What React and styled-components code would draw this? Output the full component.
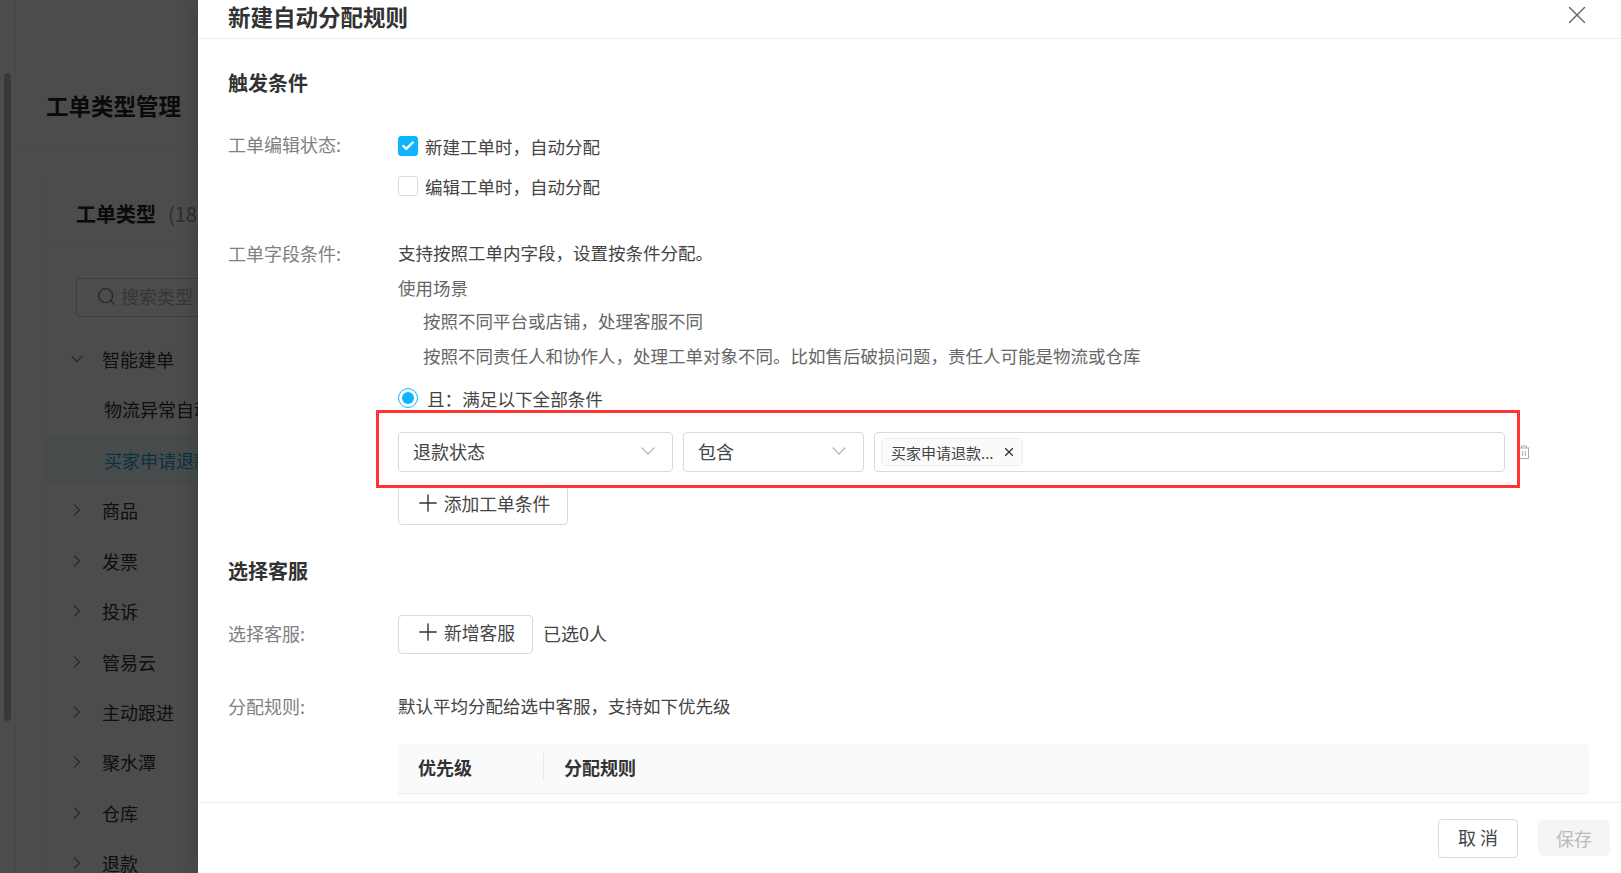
import styled, { createGlobalStyle } from "styled-components"
import { ChevronDown, ChevronRight, Check, Plus, Search, X } from "lucide-react"

const Global = createGlobalStyle`
    html, body{
        margin: 0;
        height: 100%;
        overflow: hidden;
        background: #fff;
    }
    *{
        box-sizing: border-box;
    }
    body{
        font-family: "Noto Sans CJK SC", "Noto Sans", sans-serif;
        font-size: 18px;
        color: #333;
    }
`
const Page = styled.div`
    position: relative;
    width: 1621px;
    height: 873px;
    overflow: hidden;
    display: flex;
    background: #fff;
`
const Rail = styled.div`
    width: 16px;
    flex: none;
    padding: 73px 4px 0;
    border-right: 1px solid #f2f2f2;
    span{
        display: block;
        width: 7px;
        height: 648px;
        border-radius: 4px;
        background: #bdbdbd;
    }
`
const Side = styled.div`
    flex: 1;
`
const PageTitle = styled.div`
    height: 147px;
    padding: 88px 0 0 30px;
    font-size: 22.5px;
    line-height: 34px;
    font-weight: 700;
    color: #222;
    border-bottom: 1px solid #eee;
`
const TypeCard = styled.div`
    margin: 30px 0 0 30px;
    border-left: 1px solid #f4f4f4;
`
const CardTitle = styled.div`
    height: 70px;
    padding: 21px 0 0 29px;
    font-size: 20px;
    line-height: 32px;
    font-weight: 700;
    color: #222;
    border-bottom: 1px solid #eee;
    white-space: nowrap;
    em{
        margin-left: 12px;
        font-style: normal;
        font-weight: 400;
        color: #999;
    }
`
const SearchBox = styled.div`
    display: flex;
    align-items: center;
    gap: 4px;
    width: 200px;
    height: 39px;
    margin: 31px 0 17px 29px;
    padding: 0 0 3px 19px;
    border: 1px solid #ccc;
    border-radius: 4px;
    font-size: 18px;
    color: #b5b5b5;
    white-space: nowrap;
`
const TreeRow = styled.div`
    display: flex;
    align-items: center;
    gap: 15px;
    height: 50.4px;
    padding-left: 20px;
    font-size: 18px;
    color: #333;
    white-space: nowrap;
    svg{
        color: #888;
        flex: none;
    }
`
const TreeLeaf = styled.div`
    height: 50.4px;
    padding-left: 57px;
    font-size: 18px;
    line-height: 50px;
    white-space: nowrap;
    color: ${p => (p.$active ? "#1aa9e0" : "#333")};
    background: ${p => (p.$active ? "#f1fafd" : "transparent")};
`
const Mask = styled.div`
    position: absolute;
    inset: 0;
    background: rgba(0, 0, 0, 0.7);
`
const Drawer = styled.div`
    position: absolute;
    top: 0;
    right: 0;
    bottom: 0;
    width: 1423px;
    display: flex;
    flex-direction: column;
    background: #fff;
    box-shadow: -6px 0 16px rgba(0, 0, 0, 0.12);
`
const DrawerHead = styled.div`
    flex: none;
    height: 39px;
    display: flex;
    align-items: center;
    justify-content: space-between;
    padding: 0 29px 6px 30px;
    border-bottom: 1px solid #eee;
    h1{
        margin: 0;
        font-size: 22.5px;
        line-height: 34px;
        font-weight: 700;
        color: #333;
    }
    svg{
        color: #666;
    }
`
const CloseIcon = styled(X)`
    margin: -8px 0 -6px;
`
const DrawerBody = styled.div`
    flex: 1;
    min-height: 0;
    overflow: hidden;
    padding: 0 32px 0 30px;
`
const Heading = styled.h2`
    margin: ${p => p.$top}px 0 0;
    font-size: 20px;
    line-height: 30px;
    font-weight: 700;
    color: #333;
`
const FormRow = styled.div`
    display: grid;
    grid-template-columns: 170px 1fr;
    align-items: ${p => p.$align || "start"};
    margin-top: ${p => p.$top}px;
`
const Label = styled.div`
    font-size: 18px;
    line-height: 28px;
    padding-bottom: ${p => p.$lift || 0}px;
    color: #808080;
`
const CheckList = styled.div`
    margin-top: -4px;
    padding-bottom: 1px;
`
const CheckLine = styled.div`
    display: flex;
    align-items: center;
    gap: 7px;
    height: 40px;
    font-size: 17.5px;
    color: #444;
`
const Box = styled.span`
    display: flex;
    align-items: center;
    justify-content: center;
    width: 20px;
    height: 20px;
    border-radius: 3px;
    color: #fff;
    border: 1px solid ${p => (p.$on ? "#0fb4ff" : "#d9d9d9")};
    background: ${p => (p.$on ? "#0fb4ff" : "#fff")};
`
const Text = styled.div`
    font-size: 17.5px;
    line-height: 28px;
    height: ${p => p.$h || 28}px;
    padding-left: ${p => p.$indent || 0}px;
    color: ${p => p.$color || "#444"};
    white-space: nowrap;
`
const RadioLine = styled.div`
    display: flex;
    align-items: center;
    gap: 9px;
    height: 28px;
    margin-top: 8px;
    font-size: 17.6px;
    color: #444;
`
const Radio = styled.span`
    display: block;
    width: 20px;
    height: 20px;
    border-radius: 50%;
    border: 1px solid #0fb4ff;
    padding: 3px;
    &::after{
        content: "";
        display: block;
        width: 12px;
        height: 12px;
        border-radius: 50%;
        background: #0fb4ff;
    }
`
const ConditionRow = styled.div`
    position: relative;
    display: flex;
    align-items: center;
    gap: 10px;
    width: 1107px;
    height: 40px;
    margin-top: 20px;
    &::before{
        content: "";
        position: absolute;
        left: -22px;
        right: -15px;
        top: -22px;
        bottom: -16px;
        border: 3px solid #f33;
        pointer-events: none;
        z-index: 1;
    }
`
const SelectBox = styled.div`
    display: flex;
    align-items: center;
    justify-content: space-between;
    flex: none;
    width: ${p => p.$w}px;
    height: 40px;
    padding: 0 12px 2px 14px;
    border: 1px solid #d9d9d9;
    border-radius: 4px;
    font-size: 18px;
    color: #444;
    svg{
        color: #b3b3b3;
        margin-top: -1px;
    }
`
const TagInput = styled.div`
    flex: 1;
    display: flex;
    align-items: center;
    height: 40px;
    padding-left: 6px;
    border: 1px solid #d9d9d9;
    border-radius: 4px;
`
const Tag = styled.span`
    display: flex;
    align-items: center;
    gap: 8px;
    height: 28px;
    padding: 0 6px 0 9px;
    border: 1px solid #eee;
    border-radius: 3px;
    background: #fafafa;
    font-size: 15px;
    color: #444;
    svg{
        color: #333;
    }
`
const Trash = styled.svg`
    position: absolute;
    right: -25px;
    top: 13px;
    width: 12px;
    height: 14px;
`
const OutlineButton = styled.button`
    display: flex;
    align-items: center;
    justify-content: center;
    gap: 2px;
    width: ${p => p.$w}px;
    height: ${p => p.$h || 39}px;
    margin-top: ${p => p.$top || 0}px;
    padding: 0 2px 5px 0;
    border: 1px solid #d9d9d9;
    border-radius: 4px;
    background: #fff;
    font-family: inherit;
    font-size: 17.8px;
    color: #444;
    svg{
        color: #333;
        flex: none;
    }
`
const CancelButton = styled(OutlineButton)`
    padding: 0 0 3px 4px;
    font-size: 18px;
    letter-spacing: 4px;
`
const PickRow = styled.div`
    display: flex;
    align-items: center;
    gap: 10px;
    font-size: 18px;
    color: #444;
    span{
        padding-bottom: 4px;
    }
`
const RuleHead = styled.div`
    display: flex;
    align-items: center;
    height: 50px;
    margin: 24px 0 0 170px;
    background: #fafafa;
    border-bottom: 1px solid #eee;
    border-radius: 4px 4px 0 0;
    font-size: 18px;
    font-weight: 700;
    color: #333;
`
const RuleCell = styled.div`
    width: ${p => p.$w}px;
    padding-left: 20px;
    line-height: 28px;
    transform: translateY(-2px);
    border-right: ${p => (p.$line ? "1px solid #eaeaea" : "none")};
`
const DrawerFoot = styled.div`
    flex: none;
    height: 71px;
    display: flex;
    align-items: center;
    justify-content: flex-end;
    gap: 20px;
    padding: 0 11px 0 0;
    border-top: 1px solid #eee;
`
const SaveButton = styled.button`
    width: 72px;
    height: 36px;
    border: none;
    border-radius: 5px;
    background: #f5f5f5;
    font-family: inherit;
    font-size: 18px;
    color: #bbb;
`
const groups = ["商品", "发票", "投诉", "管易云", "主动跟进", "聚水潭", "仓库", "退款"]

const App = () => {
    return (
        <Page>
            <Global />
            <Rail><span /></Rail>
            <Side>
                <PageTitle>工单类型管理</PageTitle>
                <TypeCard>
                    <CardTitle>工单类型<em>(18)</em></CardTitle>
                    <SearchBox><Search size={21} strokeWidth={1.6} color="#888" />搜索类型</SearchBox>
                    <TreeRow><ChevronDown size={20} strokeWidth={1.5} />智能建单</TreeRow>
                    <TreeLeaf>物流异常自动</TreeLeaf>
                    <TreeLeaf $active>买家申请退款</TreeLeaf>
                    {groups.map(g => (
                        <TreeRow key={g}><ChevronRight size={20} strokeWidth={1.5} />{g}</TreeRow>
                    ))}
                </TypeCard>
            </Side>
            <Mask />
            <Drawer>
                <DrawerHead>
                    <h1>新建自动分配规则</h1>
                    <CloseIcon size={30} strokeWidth={1.1} />
                </DrawerHead>
                <DrawerBody>
                    <Heading $top={29}>触发条件</Heading>
                    <FormRow $top={32}>
                        <Label>工单编辑状态:</Label>
                        <CheckList>
                            <CheckLine>
                                <Box $on><Check size={14} strokeWidth={4} /></Box>
                                新建工单时，自动分配
                            </CheckLine>
                            <CheckLine>
                                <Box />
                                编辑工单时，自动分配
                            </CheckLine>
                        </CheckList>
                    </FormRow>
                    <FormRow $top={32}>
                        <Label>工单字段条件:</Label>
                        <div>
                            <Text $h={35}>支持按照工单内字段，设置按条件分配。</Text>
                            <Text $h={33} $color="#666">使用场景</Text>
                            <Text $h={35} $indent={25} $color="#666">按照不同平台或店铺，处理客服不同</Text>
                            <Text $h={34} $indent={25} $color="#666">按照不同责任人和协作人，处理工单对象不同。比如售后破损问题，责任人可能是物流或仓库</Text>
                            <RadioLine><Radio />且：满足以下全部条件</RadioLine>
                            <ConditionRow>
                                <SelectBox $w={275}>退款状态<ChevronDown size={24} strokeWidth={1.2} /></SelectBox>
                                <SelectBox $w={181}>包含<ChevronDown size={24} strokeWidth={1.2} /></SelectBox>
                                <TagInput>
                                    <Tag>买家申请退款...<X size={14} strokeWidth={2} /></Tag>
                                </TagInput>
                                <Trash viewBox="0 0 12 14" fill="none" stroke="#aaa" strokeWidth="1">
                                    <path d="M0.5 3h11M3.5 3V1h5v2M1.5 3v10.5h9V3M4.7 6v5M7.3 6v5" />
                                </Trash>
                            </ConditionRow>
                            <OutlineButton $w={170} $h={40} $top={13}><Plus size={28} strokeWidth={1.2} />添加工单条件</OutlineButton>
                        </div>
                    </FormRow>
                    <Heading $top={31}>选择客服</Heading>
                    <FormRow $top={29} $align="center">
                        <Label $lift={4}>选择客服:</Label>
                        <PickRow>
                            <OutlineButton $w={135}><Plus size={28} strokeWidth={1.2} />新增客服</OutlineButton>
                            <span>已选0人</span>
                        </PickRow>
                    </FormRow>
                    <FormRow $top={38}>
                        <Label>分配规则:</Label>
                        <Text>默认平均分配给选中客服，支持如下优先级</Text>
                    </FormRow>
                    <RuleHead>
                        <RuleCell $w={146} $line>优先级</RuleCell>
                        <RuleCell $w={300}>分配规则</RuleCell>
                    </RuleHead>
                </DrawerBody>
                <DrawerFoot>
                    <CancelButton $w={80}>取消</CancelButton>
                    <SaveButton>保存</SaveButton>
                </DrawerFoot>
            </Drawer>
        </Page>
    )
}
export default App
